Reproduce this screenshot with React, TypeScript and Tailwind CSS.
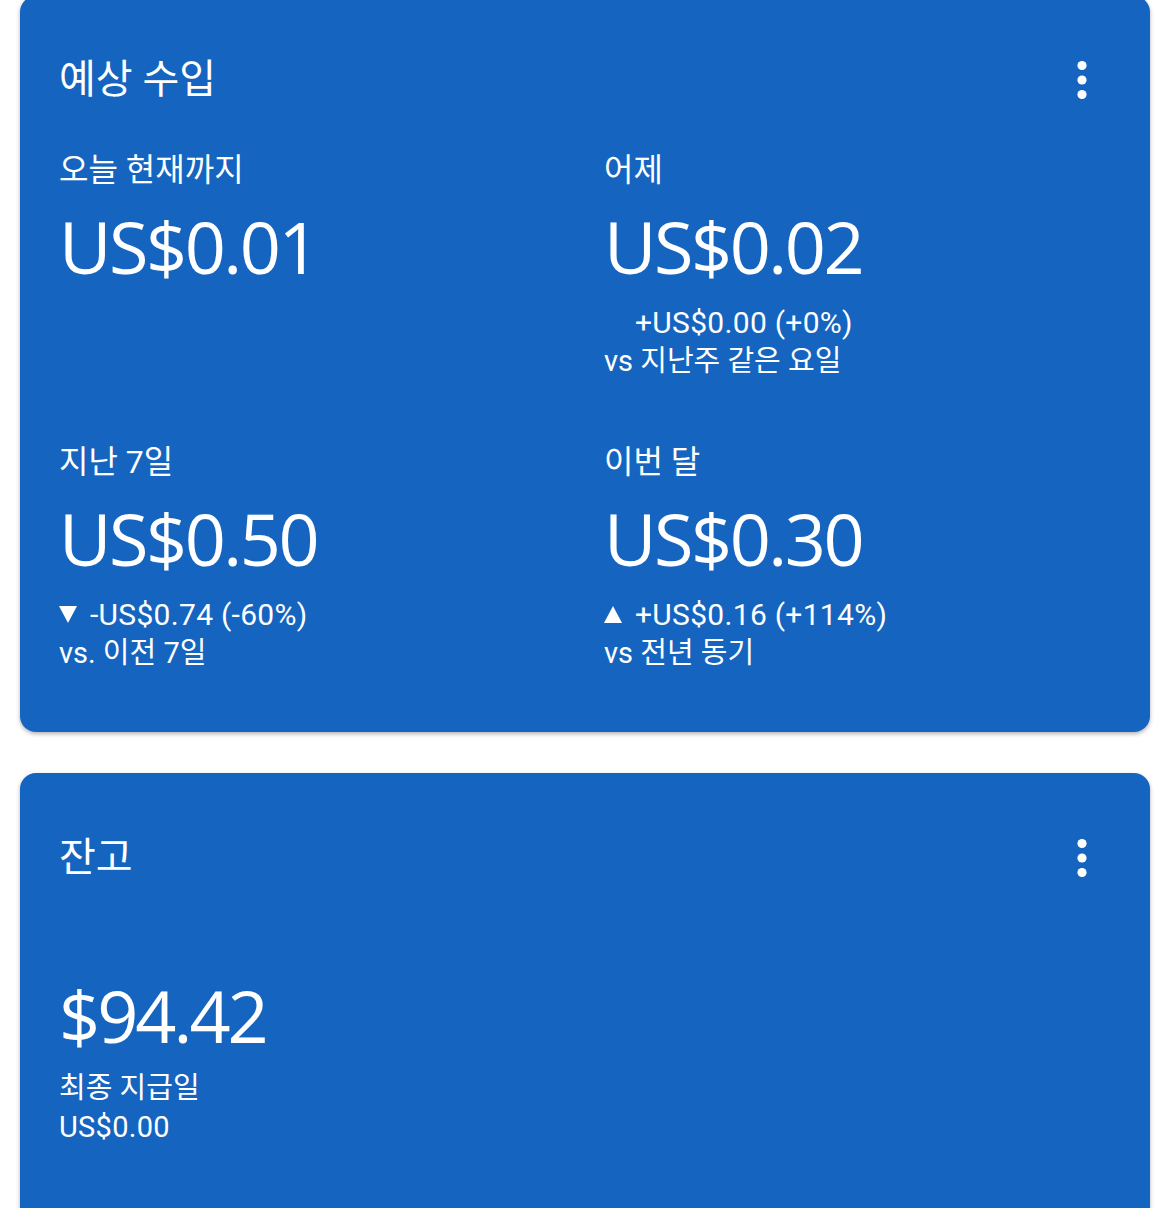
import React from "react";

const KR = "font-['Roboto','Noto_Sans_CJK_KR',sans-serif]";
const BIG = "font-['Open_Sans','Noto_Sans_CJK_KR',sans-serif]";

const MoreVert: React.FC = () => (
  <svg width="12" height="40" viewBox="0 0 12 40" className="block">
    <circle cx="6" cy="5.5" r="4.6" fill="white" />
    <circle cx="6" cy="20" r="4.6" fill="white" />
    <circle cx="6" cy="34.5" r="4.6" fill="white" />
  </svg>
);

const Tri: React.FC<{ dir?: "up" | "down" }> = ({ dir }) => (
  <span className="inline-flex w-[31px] shrink-0 items-center">
    {dir && (
      <svg width="18" height="17" viewBox="0 0 18 17">
        {dir === "up" ? (
          <polygon points="9,0 18,17 0,17" fill="white" />
        ) : (
          <polygon points="0,0 18,0 9,17" fill="white" />
        )}
      </svg>
    )}
  </span>
);

type Stat = {
  label: string;
  amount: string;
  change?: string;
  dir?: "up" | "down";
  compare?: string;
};

const StatCell: React.FC<{ stat: Stat }> = ({ stat }) => (
  <div className="flex flex-col">
    <div className={`${KR} h-[40px] text-[32px] leading-[40px]`}>{stat.label}</div>
    <div className={`${BIG} mt-[16px] h-[80px] text-[72px] leading-[80px] tracking-[-2.5px]`}>
      {stat.amount}
    </div>
    {stat.change && (
      <div className={`${KR} mt-[17px] leading-[39px]`}>
        <div className="flex items-center text-[30px] tracking-[0.3px]">
          <Tri dir={stat.dir} />
          <span>{stat.change}</span>
        </div>
        <div className="text-[29px]">{stat.compare}</div>
      </div>
    )}
  </div>
);

const stats: Stat[] = [
  { label: "오늘 현재까지", amount: "US$0.01" },
  {
    label: "어제",
    amount: "US$0.02",
    change: "+US$0.00 (+0%)",
    compare: "vs 지난주 같은 요일",
  },
  {
    label: "지난 7일",
    amount: "US$0.50",
    change: "-US$0.74 (-60%)",
    dir: "down",
    compare: "vs. 이전 7일",
  },
  {
    label: "이번 달",
    amount: "US$0.30",
    change: "+US$0.16 (+114%)",
    dir: "up",
    compare: "vs 전년 동기",
  },
];

export default function App() {
  return (
    <div className="min-h-screen overflow-hidden bg-white px-[20px] text-white">
      {/* 예상 수입 */}
      <div className="mt-[-4px] rounded-[16px] bg-[#1565c0] pb-[59px] pl-[39px] pr-[62px] pt-[62px] shadow-[0_2px_4px_rgba(0,0,0,0.3)]">
        <div className="flex h-[44px] items-center justify-between">
          <h2 className={`${KR} text-[40px] leading-[44px]`}>예상 수입</h2>
          <MoreVert />
        </div>
        <div className="mt-[48px] grid grid-cols-[545px_1fr] gap-y-[61px]">
          {stats.map((s) => (
            <StatCell key={s.label} stat={s} />
          ))}
        </div>
      </div>

      {/* 잔고 */}
      <div className="mt-[41px] h-[480px] rounded-[16px] bg-[#1565c0] pl-[39px] pr-[62px] pt-[63px] shadow-[0_2px_4px_rgba(0,0,0,0.3)]">
        <div className="flex h-[44px] items-center justify-between">
          <h2 className={`${KR} text-[40px] leading-[44px]`}>잔고</h2>
          <MoreVert />
        </div>
        <div className={`${BIG} mt-[95px] h-[80px] text-[72px] leading-[80px] tracking-[-3px]`}>
          $94.42
        </div>
        <div className={`${KR} mt-[14px] leading-[39px]`}>
          <div className="text-[29px]">최종 지급일</div>
          <div className="text-[29px] tracking-[0.3px]">US$0.00</div>
        </div>
      </div>
    </div>
  );
}
